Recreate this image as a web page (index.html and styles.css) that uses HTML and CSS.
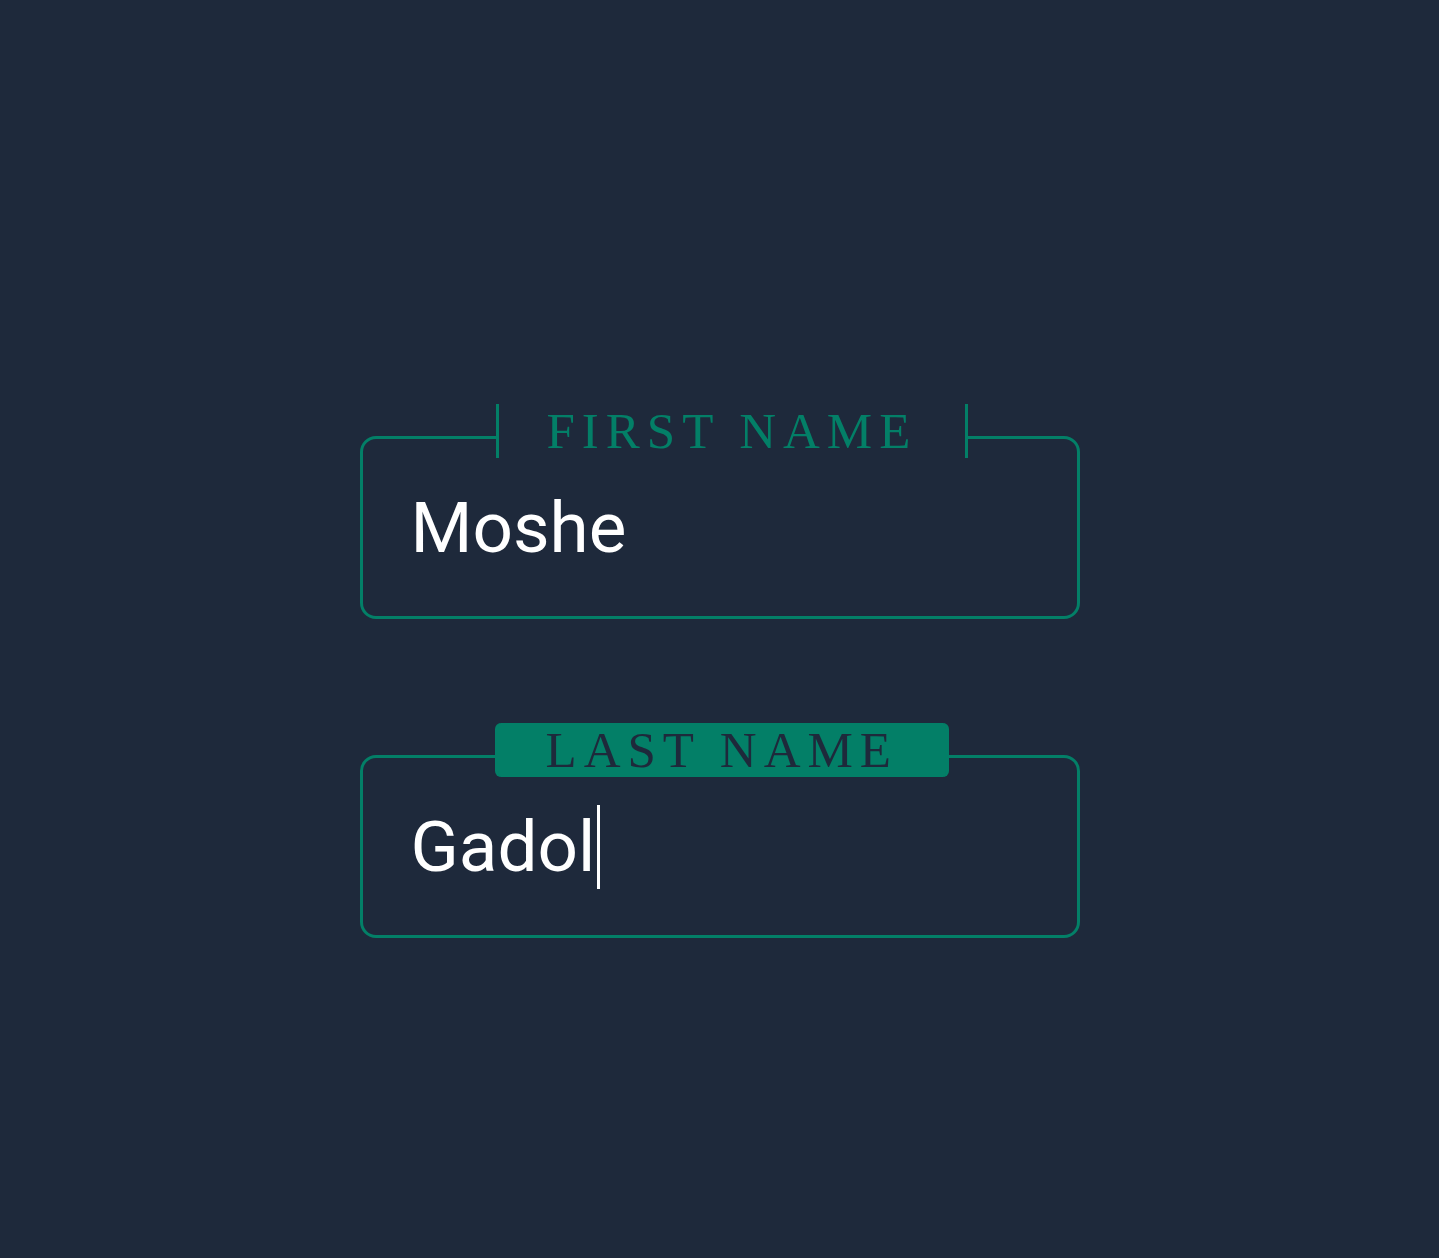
FILE: index.html
```html
<!DOCTYPE html>
<html lang="en">
<head>
<meta charset="utf-8">
<title>Name form</title>
<link rel="stylesheet" href="styles.css">
</head>
<body>
<main class="page">
  <form class="form">
    <div class="field">
      <span class="label">FIRST NAME</span>
      <div class="box">
        <span class="value">Moshe</span>
      </div>
    </div>
    <div class="field field--focused">
      <span class="label label--active">LAST NAME</span>
      <div class="box">
        <span class="value">Gadol</span><span class="caret"></span>
      </div>
    </div>
  </form>
</main>
</body>
</html>
```
FILE: styles.css
```css
html, body {
  margin: 0;
  padding: 0;
  background: #1e293b;
}

.page {
  min-height: 1258px;
  display: flex;
  justify-content: center;
  padding-top: 404px;
  box-sizing: border-box;
}

.form {
  width: 720px;
  display: flex;
  flex-direction: column;
  gap: 104px;
}

.field {
  position: relative;
  padding-top: 32px;
}

.label {
  position: absolute;
  top: 0;
  left: 136px;
  height: 54px;
  box-sizing: border-box;
  display: flex;
  align-items: center;
  padding: 0 48px;
  border-left: 3px solid #037f67;
  border-right: 3px solid #037f67;
  background: #1e293b;
  color: #037f67;
  font-family: "Liberation Serif", "Times New Roman", serif;
  font-size: 51px;
  letter-spacing: 7px;
  line-height: 1;
  white-space: nowrap;
}

.label--active {
  left: 135px;
  background: #037f67;
  color: #1e293b;
  border-radius: 6px;
}

.box {
  height: 183px;
  box-sizing: border-box;
  border: 3px solid #037f67;
  border-radius: 16px;
  padding: 0 48px;
  display: flex;
  align-items: center;
}

.value {
  color: #ffffff;
  font-family: Roboto, "Noto Sans", sans-serif;
  font-size: 71px;
  line-height: 84px;
}

.caret {
  display: inline-block;
  width: 3px;
  height: 84px;
  margin-left: 2px;
  background: #ffffff;
}
```
